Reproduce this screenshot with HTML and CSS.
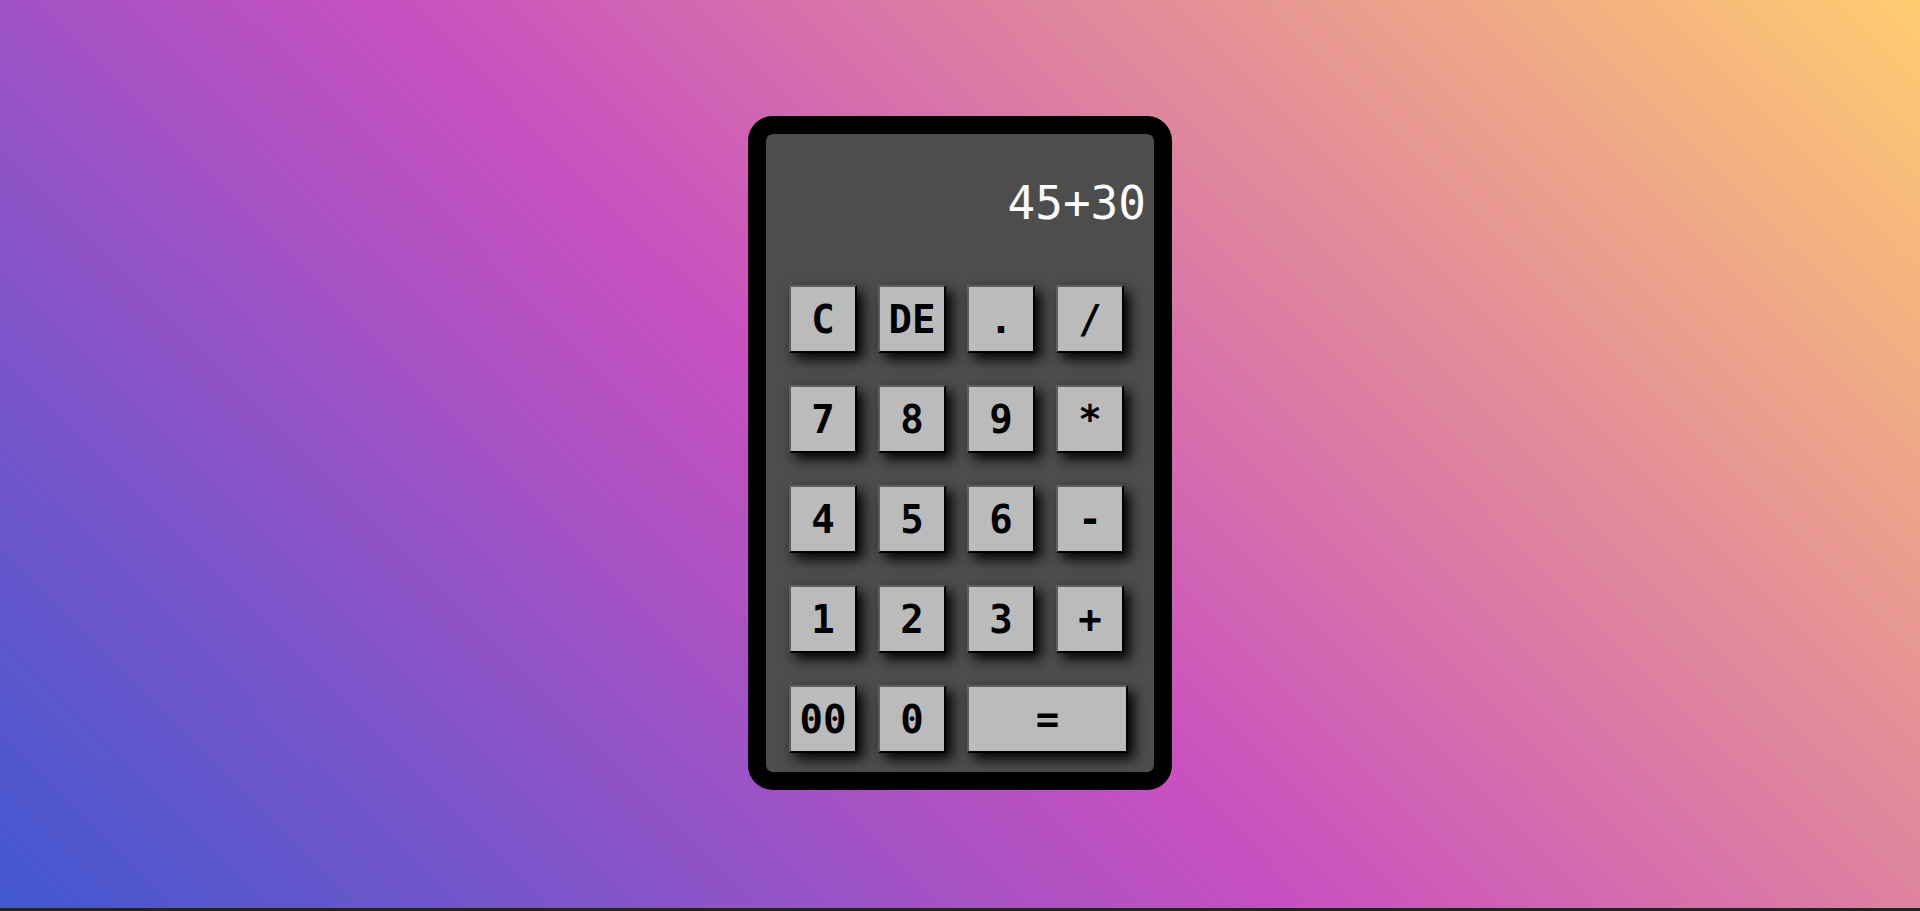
FILE: index.html
```
<!DOCTYPE html>
<html lang="en">
<head>
<meta charset="utf-8">
<title>Calculator</title>
<link rel="stylesheet" href="styles.css">
</head>
<body>
<div class="page">
  <div class="calc">
    <div class="display">45+30</div>
    <div class="keys">
      <button class="key">C</button>
      <button class="key">DE</button>
      <button class="key">.</button>
      <button class="key">/</button>
      <button class="key">7</button>
      <button class="key">8</button>
      <button class="key">9</button>
      <button class="key">*</button>
      <button class="key">4</button>
      <button class="key">5</button>
      <button class="key">6</button>
      <button class="key">-</button>
      <button class="key">1</button>
      <button class="key">2</button>
      <button class="key">3</button>
      <button class="key">+</button>
      <button class="key">00</button>
      <button class="key">0</button>
      <button class="key key-wide">=</button>
    </div>
  </div>
</div>
</body>
</html>
```
FILE: styles.css
```
html, body {
  margin: 0;
  padding: 0;
  background: #232323;
}
.page {
  height: 908px;
  box-sizing: border-box;
  padding-top: 116px;
  display: flex;
  justify-content: center;
  align-items: flex-start;
  background-color: #4158D0;
  background-image: linear-gradient(45deg, #4158D0 0%, #C850C0 46%, #FFCC70 100%);
}
.calc {
  width: 388px;
  height: 638px;
  border: 18px solid #000;
  border-radius: 25px;
  background: #4d4d4d;
  display: flex;
  flex-direction: column;
}
.display {
  height: 151px;
  box-sizing: border-box;
  padding: 43px 8px 0 0;
  text-align: right;
  color: #fff;
  font-family: "DejaVu Sans Mono", "Liberation Mono", monospace;
  font-size: 46px;
  line-height: 52px;
}
.keys {
  display: grid;
  grid-template-columns: repeat(4, 68px);
  grid-auto-rows: 68px;
  column-gap: 21px;
  row-gap: 32px;
  padding-left: 23px;
}
.key {
  margin: 0;
  padding: 0;
  box-sizing: border-box;
  width: 68px;
  height: 68px;
  background: #bbbbbb;
  color: #000;
  border-style: solid;
  border-width: 2px;
  border-color: #5e5e5e #000 #000 #5e5e5e;
  box-shadow: 6px 6px 12px #000;
  font-family: "DejaVu Sans Mono", "Liberation Mono", monospace;
  font-weight: bold;
  font-size: 39px;
  line-height: 1;
  display: flex;
  align-items: center;
  justify-content: center;
}
.key-wide {
  grid-column: span 2;
  width: 161px;
}
```
